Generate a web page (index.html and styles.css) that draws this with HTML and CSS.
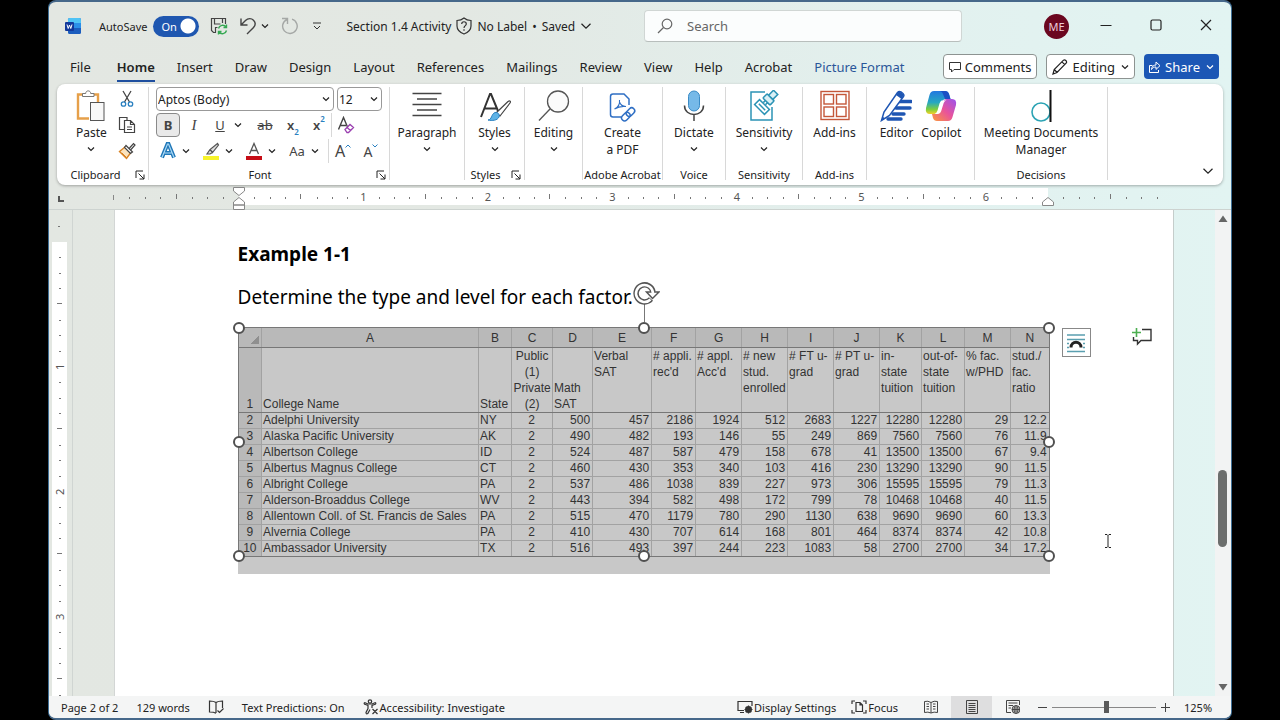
FILE: index.html
```html
<!DOCTYPE html>
<html lang="en">
<head>
  <meta charset="UTF-8">
  <meta name="viewport" content="width=device-width, initial-scale=1">
  <title>Section 1.4 Activity - Word</title>
  <link rel="stylesheet" href="styles.css">
</head>
<body>
  <!-- Shared icons -->
  <svg class="sprite" aria-hidden="true">
    <symbol id="chev" viewBox="0 0 8 8"><path d="M1 2.500l3 3 3-3" fill="none" stroke="currentColor" stroke-width="1.200" vector-effect="non-scaling-stroke"/></symbol>
    <symbol id="launch" viewBox="0 0 10 10"><path d="M1 8V1h7M3.500 3.500L9 9M9 4.500V9H4.500" fill="none" stroke="currentColor"/></symbol>
  </svg>

  <div class="window">
    <!-- Title bar -->
    <header class="titlebar">
      <div class="quick-access">
        <svg class="app-icon" width="16" height="18" viewBox="0 0 16 18">
          <rect x="3" y="1" width="13" height="16" rx="1.5" fill="#1b5dbe"/>
          <path d="M3 6V2.500Q3 1 4.500 1h10Q16 1 16 2.500V6z" fill="#4fc3f5"/>
          <rect x="3" y="6" width="13" height="5" fill="#2b8fe8"/>
          <rect x="0" y="5" width="9" height="9" rx="1" fill="#12389b"/>
          <path d="M2 7.500l1.200 4 1.300-3.500 1.300 3.500L7 7.500" fill="none" stroke="#fff"/>
        </svg>
        <label for="autosave" class="autosave-label">AutoSave</label>
        <span class="switch">
          <input type="checkbox" id="autosave" checked>
          <span class="switch-text">On</span>
        </span>
        <button class="qa-btn" aria-label="Save">
          <svg width="18" height="18" viewBox="0 0 18 18" fill="none">
            <path d="M6 15.500H3.500L1.500 13.500V1.500h14V7M4.500 1.500V7h6M12.500 1.500V6M5.500 15.500V10.500h2" stroke="#444" stroke-width="1.200"/>
            <path d="M8.500 11.500a4.200 4.200 0 0 1 7.500-1.500M16.500 7.500v3h-3M16.500 13.500a4.200 4.200 0 0 1-7.500 1.500M8.500 17.500v-3h3" stroke="#35a852" stroke-width="1.400"/>
          </svg>
        </button>
        <button class="qa-btn" aria-label="Undo">
          <svg width="18" height="18" viewBox="0 0 18 18" fill="none" stroke="#444" stroke-width="1.400"><path d="M2 1.500v6.500h6.500M2 8l4.500-4.500C9 1 12.500 1.200 14.500 3.200s2 5 0 7.300L8 17"/></svg>
        </button>
        <svg class="chev"><use href="#chev"/></svg>
        <button class="qa-btn" aria-label="Redo">
          <svg width="18" height="18" viewBox="0 0 18 18" fill="none" stroke="#a5a8a6" stroke-width="1.400"><path d="M2 1.500h5.500V7M7 2.500a7.300 7.300 0 1 0 5-.3"/></svg>
        </button>
        <button class="qa-btn" aria-label="Customize Quick Access Toolbar">
          <svg width="10" height="10" viewBox="0 0 10 10" fill="none" stroke="#333"><path d="M1 2h8M2 5l3 3 3-3"/></svg>
        </button>
        <div class="doc-title">
          <span>Section 1.4 Activity</span>
          <svg width="16" height="18" viewBox="0 0 16 18" fill="none" stroke="#333" stroke-width="1.200"><path d="M8 1C6 2.800 3.500 3.500 1 3.500V9c0 4 3 6.500 7 8 4-1.500 7-4 7-8V3.500C12.500 3.500 10 2.800 8 1z"/><path d="M5.700 7c0-3 4.600-3 4.600 0C10.300 8.800 8 8.500 8 11M8 12.300v1.400"/></svg>
          <span>No Label</span><span>•</span><span>Saved</span>
          <svg class="chev-lg"><use href="#chev"/></svg>
        </div>
      </div>
      <label class="search">
        <svg width="16" height="16" viewBox="0 0 16 16" fill="none" stroke="#666" stroke-width="1.200"><circle cx="10" cy="6" r="4.800"/><path d="M6.500 9.500L1 15"/></svg>
        <input type="search" placeholder="Search" aria-label="Search">
      </label>
      <div class="window-controls">
        <button class="avatar" aria-label="Account">ME</button>
        <button aria-label="Minimize"><svg width="12" height="12" viewBox="0 0 12 12"><path d="M0.500 6.500h11" stroke="#222"/></svg></button>
        <button aria-label="Maximize"><svg width="12" height="12" viewBox="0 0 12 12"><rect x="1" y="1" width="10" height="10" rx="1.500" fill="none" stroke="#222" stroke-width="1.200"/></svg></button>
        <button aria-label="Close"><svg width="12" height="12" viewBox="0 0 12 12"><path d="M1 1l10 10M11 1L1 11" stroke="#222" stroke-width="1.200"/></svg></button>
      </div>
    </header>

    <!-- Ribbon tabs -->
    <div class="tab-row">
      <nav class="tabs">
        <button>File</button>
        <button class="active">Home</button>
        <button>Insert</button>
        <button>Draw</button>
        <button>Design</button>
        <button>Layout</button>
        <button>References</button>
        <button>Mailings</button>
        <button>Review</button>
        <button>View</button>
        <button>Help</button>
        <button>Acrobat</button>
        <button class="context">Picture Format</button>
      </nav>
      <div class="tab-actions">
        <button class="outlined"><svg width="12" height="12" viewBox="0 0 12 12" fill="none" stroke="#333"><path d="M.500 1.500h11v7H5L2.500 11V8.500h-2z"/></svg>Comments</button>
        <button class="outlined"><svg width="16" height="16" viewBox="0 0 16 16" fill="none" stroke="#222" stroke-width="1.200"><path d="M1 15l1.200-4.500L11.500 1.200c1.500-1 3.800 1 2.800 2.800L5 13.500zM10 2.800l3 3M2.200 10.500l3 3"/></svg>Editing<svg class="chev"><use href="#chev"/></svg></button>
        <button class="share"><svg width="12" height="12" viewBox="0 0 12 12" fill="none" stroke="#fff"><path d="M3.500 4.500h-3v7h9V9M2.500 8.500c.300-3 2-4.500 4.500-4.500V1l4 3.700-4 3.700V6C5 6 3.500 6.500 2.500 8.500z"/></svg>Share<svg class="chev"><use href="#chev"/></svg></button>
      </div>
    </div>

    <!-- Ribbon -->
    <div class="ribbon">
      <section class="group">
        <div class="group-body clipboard">
          <button class="big">
            <svg width="30" height="32" viewBox="0 0 30 32" fill="none"><path d="M13 28.500H2V4.500h20V12" stroke="#e6a04a" stroke-width="2.400"/><path d="M6.500 6.500v-3h3.200c0-3.500 5-3.500 5 0H18v3z" fill="#fff" stroke="#777"/><rect x="14.500" y="12.500" width="13.500" height="18" fill="#f8f8f8" stroke="#555"/></svg>
            <span>Paste</span><svg class="chev"><use href="#chev"/></svg>
          </button>
          <div class="stack">
            <button aria-label="Cut"><svg width="18" height="18" viewBox="0 0 18 18" fill="none"><path d="M5 1l6.500 11M13 1L6.500 12" stroke="#444" stroke-width="1.300"/><circle cx="5.500" cy="14" r="2.200" stroke="#2a80c0" stroke-width="1.300"/><circle cx="12.500" cy="14" r="2.200" stroke="#2a80c0" stroke-width="1.300"/></svg></button>
            <button aria-label="Copy"><svg width="18" height="18" viewBox="0 0 18 18" fill="none" stroke="#444" stroke-width="1.200"><path d="M6.500 13.500h-5v-12H9V4M6.500 4.500h6l4 4v8h-10zM12.500 4.500v4h4M9 11h5M9 13.500h5"/></svg></button>
            <button aria-label="Format Painter"><svg width="18" height="18" viewBox="0 0 18 18" fill="none"><path d="M7 5L1.500 9.500 8.500 16.500 12.500 11z" fill="#fbe3bd" stroke="#d98324" stroke-width="1.400"/><path d="M4 11l4.500 4.500" stroke="#d98324"/><path d="M8 3.500l6.500 6.500-2 1.500L6.500 5.500zM11.500 6l4-4.500 1.500 1.500-4 4.500" fill="#fff" stroke="#444" stroke-width="1.200"/></svg></button>
          </div>
        </div>
        <footer>Clipboard<svg class="launch"><use href="#launch"/></svg></footer>
      </section>

      <section class="group">
        <div class="group-body font-tools">
          <div class="font-row selects">
            <span class="select font-name"><select aria-label="Font"><option>Aptos (Body)</option></select><svg class="chev"><use href="#chev"/></svg></span>
            <span class="select font-size"><select aria-label="Font Size"><option>12</option></select><svg class="chev"><use href="#chev"/></svg></span>
          </div>
          <div class="font-row">
            <button class="tool pressed"><b>B</b></button>
            <button class="tool wide"><em>I</em></button>
            <button class="tool"><u>U</u></button>
            <svg class="chev drop"><use href="#chev"/></svg>
            <button class="tool wide"><s>ab</s></button>
            <button class="tool wide bold">x<sub>2</sub></button>
            <button class="tool bold">x<sup>2</sup></button>
            <span class="divider"></span>
            <button class="tool wide" aria-label="Clear Formatting"><svg width="18" height="18" viewBox="0 0 18 18" fill="none"><path d="M1.500 13.500L6.500 1.500l4 9.500M3.300 9.500H9" stroke="#444" stroke-width="1.400"/><path d="M8 13.500l5-5 3.500 3-5 5h-1.500zM10 11.500l3.500 3" stroke="#9a3fb0" stroke-width="1.300"/></svg></button>
          </div>
          <div class="font-row">
            <button class="tool" aria-label="Text Effects"><svg width="18" height="18" viewBox="0 0 18 18" fill="none"><path d="M3 15.500L8.500 2h1L15 15.500M5.500 11h7" stroke="#2178b8" stroke-width="4"/><path d="M3 15.500L8.500 2h1L15 15.500M5.500 11h7" stroke="#a9d8f5" stroke-width="1.200"/></svg></button>
            <svg class="chev drop"><use href="#chev"/></svg>
            <button class="tool" aria-label="Highlight"><svg width="18" height="18" viewBox="0 0 18 18" fill="none"><rect x="1" y="14" width="16" height="4" fill="#f7f32a"/><path d="M15.500 1.500L8 7.500l2.500 3 6-7.500zM8 7.500L5 12h3l2.500-1.500" fill="#ddd" stroke="#555" stroke-width="1.200"/></svg></button>
            <svg class="chev drop"><use href="#chev"/></svg>
            <button class="tool" aria-label="Font Color"><svg width="18" height="18" viewBox="0 0 18 18" fill="none"><rect x="1" y="14" width="16" height="4" fill="#c60d16"/><path d="M4.500 12L9 1.500 13.500 12M6 8.500h6" stroke="#555" stroke-width="1.300"/></svg></button>
            <svg class="chev drop"><use href="#chev"/></svg>
            <button class="tool">Aa</button>
            <svg class="chev drop"><use href="#chev"/></svg>
            <span class="divider"></span>
            <button class="tool wide grow">A<svg width="6" height="4" viewBox="0 0 6 4" fill="none" stroke="#2a80c0"><path d="M.500 3.500L3 1l2.500 2.500"/></svg></button>
            <button class="tool wide shrink">A<svg width="6" height="4" viewBox="0 0 6 4" fill="none" stroke="#2a80c0"><path d="M.500.500L3 3 5.500.500"/></svg></button>
          </div>
        </div>
        <footer>Font<svg class="launch"><use href="#launch"/></svg></footer>
      </section>

      <section class="group">
        <div class="group-body"><button class="big">
          <svg width="30" height="32" viewBox="0 0 30 32" stroke="#444" stroke-width="1.300"><path d="M.500 3.500h29M5 9h20M.500 14.500h29M5 20h20M.500 25.500h29"/></svg>
          <span>Paragraph</span><svg class="chev"><use href="#chev"/></svg>
        </button></div>
        <footer></footer>
      </section>

      <section class="group">
        <div class="group-body"><button class="big">
          <svg width="32" height="32" viewBox="0 0 32 32" fill="none"><path d="M2 27L11 4h1l7 17M6 18.500h11" stroke="#333" stroke-width="2"/><path d="M17 23L29 11.500c2-1.500 3 0 2 1.500L21 26z" fill="#fff" stroke="#444" stroke-width="1.200"/><path d="M9 30c4 0 3-6 7-7.500 3-.500 5 2 4 4.500-1.500 3.500-7 4-11 3z" fill="#5fb3e6" stroke="#2a80c0"/></svg>
          <span>Styles</span><svg class="chev"><use href="#chev"/></svg>
        </button></div>
        <footer>Styles<svg class="launch"><use href="#launch"/></svg></footer>
      </section>

      <section class="group">
        <div class="group-body"><button class="big">
          <svg width="32" height="32" viewBox="0 0 32 32" fill="none" stroke="#555" stroke-width="1.300"><circle cx="20" cy="11.500" r="10.500" fill="#fbfbfb"/><path d="M12 19L1 30.500"/></svg>
          <span>Editing</span><svg class="chev"><use href="#chev"/></svg>
        </button></div>
        <footer></footer>
      </section>

      <section class="group">
        <div class="group-body"><button class="big">
          <svg width="30" height="32" viewBox="0 0 30 32" fill="none" stroke="#2f6fc4" stroke-width="1.500"><path d="M13 27H5q-2.500 0-2.500-2.500v-18Q2.500 4 5 4h11l5 5v6"/><path d="M6.500 19c3-1.500 5.500-5 5-9M11.500 12c1 3 3 4.500 6.500 4.500-4-.500-7.500 0-11.500 2.500" stroke-width="1.100"/><g transform="rotate(-45 20.500 24)"><rect x="12" y="21" width="9.500" height="6" rx="3"/><rect x="18.500" y="21" width="9.500" height="6" rx="3"/></g></svg>
          <span>Create<br>a PDF</span>
        </button></div>
        <footer>Adobe Acrobat</footer>
      </section>

      <section class="group">
        <div class="group-body"><button class="big">
          <svg width="24" height="32" viewBox="0 0 24 32" fill="none"><rect x="6.500" y="1" width="11" height="20" rx="5.500" fill="#76b9e8" stroke="#3a8bc6"/><path d="M2.500 15.500c0 12 19 12 19 0M12 25v6" stroke="#444" stroke-width="1.500"/></svg>
          <span>Dictate</span><svg class="chev"><use href="#chev"/></svg>
        </button></div>
        <footer>Voice</footer>
      </section>

      <section class="group">
        <div class="group-body"><button class="big">
          <svg width="30" height="32" viewBox="0 0 30 32" fill="none" stroke="#2b93b5" stroke-width="1.500"><path d="M16 2H2v28h21V17"/><g transform="rotate(45 13 17)"><rect x="6" y="13.500" width="14" height="7"/><path d="M8.500 17h9"/></g><g transform="rotate(-45 21 8)" fill="#d9f0f6"><rect x="16" y="3" width="6" height="10" rx="1"/><rect x="22" y="5" width="7" height="6"/><path d="M13 6.500h3M13 9.500h3"/></g></svg>
          <span>Sensitivity</span><svg class="chev"><use href="#chev"/></svg>
        </button></div>
        <footer>Sensitivity</footer>
      </section>

      <section class="group">
        <div class="group-body"><button class="big">
          <svg width="30" height="32" viewBox="0 0 30 32" fill="none" stroke="#c4573a" stroke-width="1.400"><rect x="1" y="1.500" width="28" height="28"/><rect x="4" y="4.500" width="9.500" height="9.500"/><rect x="16.500" y="4.500" width="9.500" height="9.500"/><rect x="4" y="17" width="9.500" height="9.500"/><rect x="16.500" y="17" width="9.500" height="9.500"/></svg>
          <span>Add-ins</span>
        </button></div>
        <footer>Add-ins</footer>
      </section>

      <section class="group">
        <div class="group-body pair">
          <button class="big">
            <svg width="32" height="32" viewBox="0 0 32 32" fill="none"><path d="M19 11.500h12M16 18h14M13 24h11M8 29h13" stroke="#1f56b3" stroke-width="3.400" stroke-linecap="round"/><path d="M1.500 30.500L4 22 17.500 2.500q1.500-1.500 3.500-.500l2 1.500q1.500 1.500.500 3L9.500 25.500z" fill="#fff" stroke="#1f56b3" stroke-width="1.500"/><path d="M16 5l2-3q2-1 5 2 1 1.500-.500 3.500l-1 1.500zM1.500 30.500l1-4 2.500 2z" fill="#1f56b3"/></svg>
            <span>Editor</span>
          </button>
          <button class="big">
            <svg width="32" height="32" viewBox="0 0 32 32">
              <defs>
                <linearGradient id="cpA" x1="0" y1="0" x2="0" y2="1"><stop offset="0" stop-color="#2378e0"/><stop offset=".5" stop-color="#27a8c0"/><stop offset=".8" stop-color="#7fcf3c"/><stop offset="1" stop-color="#f4d02c"/></linearGradient>
                <linearGradient id="cpB" x1="1" y1="0" x2="0" y2="1"><stop offset="0" stop-color="#9a52ee"/><stop offset=".5" stop-color="#e9549a"/><stop offset="1" stop-color="#fb9a3a"/></linearGradient>
              </defs>
              <path d="M9 1h11q3 0 4 3l1.500 5H21q-3 0-4 3l-3 9q-1 3-4 3H5q-5 0-4-6L4.500 5Q5.500 1 9 1z" fill="url(#cpA)"/>
              <path d="M20 1q3 0 4 3l1.500 5H20l-2-5q-1-3-4-3z" fill="#1c4fc4"/>
              <path d="M23 31H12q-3 0-4-3l-1-4h4q3 0 4-3l3-9q1-3 4-3h5q5 0 4 6l-3.500 12Q26.500 31 23 31z" fill="url(#cpB)"/>
              <path d="M16.500 10.500h5q-2 0-2.800 2.500l-2.500 8q-1 3-3.700 3h-3q2-.500 3-3.500l2-7q.700-2 2-3z" fill="#fff"/>
            </svg>
            <span>Copilot</span>
          </button>
        </div>
        <footer></footer>
      </section>

      <section class="group">
        <div class="group-body"><button class="big">
          <svg width="22" height="32" viewBox="0 0 22 32" fill="none"><circle cx="11" cy="22" r="9" stroke="#2ba3b4" stroke-width="1.600"/><path d="M20.500 0v32" stroke="#111" stroke-width="2"/></svg>
          <span>Meeting Documents<br>Manager</span>
        </button></div>
        <footer>Decisions</footer>
      </section>

      <button class="collapse" aria-label="Collapse the Ribbon"><svg class="chev-lg"><use href="#chev"/></svg></button>
    </div>

    <!-- Horizontal ruler -->
    <div class="ruler">
      <button class="tab-stop" aria-label="Left tab"></button>
      <div class="ruler-margin left">
        <span class="cell"><i></i></span><span class="cell"></span>
      </div>
      <div class="ruler-body">
        <svg class="indent" width="12" height="24" viewBox="0 0 12 24" fill="#fff" stroke="#888"><path d="M.500.500h11V4L6 8.500.500 4zM.500 15L6 10.500l5.500 4.500v3H.500zM.500 18h11v4.500H.500z"/></svg>
        <span class="cell"><i></i></span><span class="cell"><b>1</b></span>
        <span class="cell"><i></i></span><span class="cell"><b>2</b></span>
        <span class="cell"><i></i></span><span class="cell"><b>3</b></span>
        <span class="cell"><i></i></span><span class="cell"><b>4</b></span>
        <span class="cell"><i></i></span><span class="cell"><b>5</b></span>
        <span class="cell"><i></i></span><span class="cell"><b>6</b></span>
        <span class="cell"></span>
        <svg class="indent right" width="12" height="24" viewBox="0 0 12 24" fill="#fff" stroke="#888"><path d="M.500 15L6 10.500l5.500 4.500v3.500H.500z"/></svg>
      </div>
      <div class="ruler-margin right">
        <span class="cell"><i></i></span><span class="cell"></span>
      </div>
    </div>

    <!-- Document -->
    <main class="workspace">
      <div class="v-ruler">
        <span class="v-top"></span>
        <div class="v-body">
          <span class="v-cell"><i></i></span><span class="v-cell"><b>1</b></span>
          <span class="v-cell"><i></i></span><span class="v-cell"><b>2</b></span>
          <span class="v-cell"><i></i></span><span class="v-cell"><b>3</b></span>
          <span class="v-cell"><i></i></span><span class="v-cell"></span>
        </div>
      </div>
      <article class="page">
        <h1>Example 1-1</h1>
        <p>Determine the type and level for each factor.</p>
        <div class="selection">
          <div class="picture">
            <table>
              <colgroup>
                <col style="width:23px"><col style="width:217px"><col style="width:33px"><col style="width:41px"><col style="width:40px"><col style="width:59px"><col style="width:44px"><col style="width:46px"><col style="width:46px"><col style="width:46px"><col style="width:46px"><col style="width:42px"><col style="width:43px"><col style="width:46px"><col style="width:38px">
              </colgroup>
              <thead>
                <tr class="letters"><th class="corner"></th><th>A</th><th>B</th><th>C</th><th>D</th><th>E</th><th>F</th><th>G</th><th>H</th><th>I</th><th>J</th><th>K</th><th>L</th><th>M</th><th>N</th></tr>
                <tr class="titles"><th>1</th><td>College Name</td><td>State</td><td>Public<br>(1)<br>Private<br>(2)</td><td>Math<br>SAT</td><td>Verbal<br>SAT</td><td># appli.<br>rec'd</td><td># appl.<br>Acc'd</td><td># new<br>stud.<br>enrolled</td><td># FT u-<br>grad</td><td># PT u-<br>grad</td><td>in-<br>state<br>tuition</td><td>out-of-<br>state<br>tuition</td><td>% fac.<br>w/PHD</td><td>stud./<br>fac.<br>ratio</td></tr>
              </thead>
              <tbody>
                <tr><th>2</th><td>Adelphi University</td><td>NY</td><td>2</td><td>500</td><td>457</td><td>2186</td><td>1924</td><td>512</td><td>2683</td><td>1227</td><td>12280</td><td>12280</td><td>29</td><td>12.2</td></tr>
                <tr><th>3</th><td>Alaska Pacific University</td><td>AK</td><td>2</td><td>490</td><td>482</td><td>193</td><td>146</td><td>55</td><td>249</td><td>869</td><td>7560</td><td>7560</td><td>76</td><td>11.9</td></tr>
                <tr><th>4</th><td>Albertson College</td><td>ID</td><td>2</td><td>524</td><td>487</td><td>587</td><td>479</td><td>158</td><td>678</td><td>41</td><td>13500</td><td>13500</td><td>67</td><td>9.4</td></tr>
                <tr><th>5</th><td>Albertus Magnus College</td><td>CT</td><td>2</td><td>460</td><td>430</td><td>353</td><td>340</td><td>103</td><td>416</td><td>230</td><td>13290</td><td>13290</td><td>90</td><td>11.5</td></tr>
                <tr><th>6</th><td>Albright College</td><td>PA</td><td>2</td><td>537</td><td>486</td><td>1038</td><td>839</td><td>227</td><td>973</td><td>306</td><td>15595</td><td>15595</td><td>79</td><td>11.3</td></tr>
                <tr><th>7</th><td>Alderson-Broaddus College</td><td>WV</td><td>2</td><td>443</td><td>394</td><td>582</td><td>498</td><td>172</td><td>799</td><td>78</td><td>10468</td><td>10468</td><td>40</td><td>11.5</td></tr>
                <tr><th>8</th><td>Allentown Coll. of St. Francis de Sales</td><td>PA</td><td>2</td><td>515</td><td>470</td><td>1179</td><td>780</td><td>290</td><td>1130</td><td>638</td><td>9690</td><td>9690</td><td>60</td><td>13.3</td></tr>
                <tr><th>9</th><td>Alvernia College</td><td>PA</td><td>2</td><td>410</td><td>430</td><td>707</td><td>614</td><td>168</td><td>801</td><td>464</td><td>8374</td><td>8374</td><td>42</td><td>10.8</td></tr>
                <tr><th>10</th><td>Ambassador University</td><td>TX</td><td>2</td><td>516</td><td>493</td><td>397</td><td>244</td><td>223</td><td>1083</td><td>58</td><td>2700</td><td>2700</td><td>34</td><td>17.2</td></tr>
              </tbody>
            </table>
            <span class="handle nw"></span><span class="handle n"></span><span class="handle ne"></span>
            <span class="handle w"></span><span class="handle e"></span>
            <span class="handle sw"></span><span class="handle s"></span><span class="handle se"></span>
            <span class="stem"></span>
            <svg class="rotate" width="28" height="24" viewBox="0 0 28 24" fill="none"><path d="M19 18A8.500 8.500 0 1 1 21 11" stroke="#555" stroke-width="5.500"/><path d="M14.500 11H27l-6.500 6.500z" fill="#fff" stroke="#555" stroke-width="1.500"/><path d="M18.500 18.500A8.500 8.500 0 1 1 21 12.500" stroke="#fff" stroke-width="2.500"/></svg>
            <button class="layout-options" aria-label="Layout Options"><svg width="20" height="20" viewBox="0 0 20 20" fill="none"><path d="M1 2h18M1 6.500h18M1 10.500h2M17 10.500h2M1 14.500h2M17 14.500h2M1 18.500h18" stroke="#5a9fb0" stroke-width="1.500"/><path d="M5 14.500c0-7 10-7 10 0" stroke="#222" stroke-width="3"/></svg></button>
            <button class="add-comment" aria-label="New Comment"><svg width="20" height="20" viewBox="0 0 20 20" fill="none"><path d="M10 2.500h9v11H9L5.500 17v-3.500h-4V10" stroke="#333" stroke-width="1.400"/><path d="M4.500 1v9M0 5.500h9" stroke="#4caf50" stroke-width="1.600"/></svg></button>
          </div>
        </div>
        <svg class="caret" width="8" height="14" viewBox="0 0 8 14" fill="none" stroke="#222"><path d="M1 .500h2l1 1 1-1h2M4 1.500v11M1 13.500h2l1-1 1 1h2"/></svg>
      </article>
      <div class="scrollbar">
        <svg width="10" height="8" viewBox="0 0 10 8"><path d="M5 0.500L9.500 7h-9z" fill="#666"/></svg>
        <span class="thumb"></span>
        <svg width="10" height="8" viewBox="0 0 10 8"><path d="M5 7.500L.500 1h9z" fill="#666"/></svg>
      </div>
    </main>

    <!-- Status bar -->
    <footer class="statusbar">
      <div class="status-left">
        <span>Page 2 of 2</span>
        <span>129 words</span>
        <button aria-label="Proofing"><svg width="16" height="14" viewBox="0 0 16 14" fill="none" stroke="#333" stroke-width="1.200"><path d="M8 2.500C6 1 4 1 1.500 1v11c2.500 0 4.500 0 6.500 1.300M8 2.500C10 1 12 1 14.500 1v7M8 2.500V13M9.500 10.500l2 2 4-4"/></svg></button>
        <span>Text Predictions: On</span>
        <button><svg width="16" height="16" viewBox="0 0 16 16" fill="none" stroke="#333" stroke-width="1.200"><circle cx="7" cy="2.500" r="1.700"/><path d="M1.500 3.500q-1 1.500 1 2l2.500 1v3l-2 4q0 2 1.800 1L7 10.500M12.500 3.500q1 1.500-1 2L9 6.500V9M1.500 3.500L5 5h4l3.500-1.500M9.500 10l5 5M14.500 10l-5 5"/></svg>Accessibility: Investigate</button>
      </div>
      <div class="status-right">
        <button><svg width="16" height="14" viewBox="0 0 16 14" fill="none" stroke="#333" stroke-width="1.200"><path d="M7 10.500H1v-9h14V6M3 12.500h4"/><circle cx="11.500" cy="9.500" r="2.500" stroke-width="2"/><path d="M11.500 5.500v8M7.500 9.500h8M8.800 6.800l5.400 5.400M14.200 6.800l-5.400 5.400"/></svg>Display Settings</button>
        <button class="focus"><svg width="16" height="14" viewBox="0 0 16 14" fill="none" stroke="#333" stroke-width="1.200"><path d="M4 1H1v3M12 1h3v3M4 13H1v-3M12 13h3v-3M5 2.500h4l2.500 2.500v6.500H5zM9 2.500V5h2.500"/></svg>Focus</button>
        <button class="view" aria-label="Read Mode"><svg width="14" height="14" viewBox="0 0 14 14" fill="none" stroke="#444"><path d="M7 2.500Q4 .500.500 1.500v11Q4 11.500 7 13q3-1.500 6.500-.500v-11Q10 .500 7 2.500V13M2.500 4H5M2.500 6.500H5M2.500 9H5M9 4h2.500M9 6.500h2.500M9 9h2.500"/></svg></button>
        <button class="view current" aria-label="Print Layout"><svg width="12" height="14" viewBox="0 0 12 14" fill="none" stroke="#444"><path d="M.500.500h11v13H.500zM2.500 3.500h7M2.500 5.500h7M2.500 7.500h7M2.500 9.500h7M2.500 11.500h7"/></svg></button>
        <button class="view" aria-label="Web Layout"><svg width="14" height="14" viewBox="0 0 14 14" fill="none" stroke="#444"><path d="M5 12.500H.500v-12h13V5M2.500 3h9M2.500 5.500H7M2.500 8H5"/><circle cx="10" cy="9.500" r="4" fill="#ccc"/><path d="M6 9.500h8M10 5.500v8M8.500 6.500q-1 3 0 6M11.500 6.500q1 3 0 6"/></svg></button>
        <button class="step" aria-label="Zoom Out"><svg width="9" height="9" viewBox="0 0 9 9"><path d="M0 4.500h9" stroke="#444"/></svg></button>
        <input type="range" class="zoom" min="0" max="100" value="53" aria-label="Zoom">
        <button class="step" aria-label="Zoom In"><svg width="9" height="9" viewBox="0 0 9 9"><path d="M0 4.500h9M4.500 0v9" stroke="#444"/></svg></button>
        <span class="percent">125%</span>
      </div>
    </footer>
  </div>
</body>
</html>
```
FILE: styles.css
```css
/* Base */
* { box-sizing: border-box; margin: 0; padding: 0; }
body {
  background: #000;
  padding: 0 48px;
  font-family: "Noto Sans", "Open Sans", sans-serif;
  font-size: 12px;
  color: #222;
}
button, select, input {
  font: inherit;
  color: inherit;
  background: none;
  border: none;
}
svg { flex: none; }
.sprite { position: absolute; width: 0; height: 0; }
.chev { width: 8px; height: 8px; }
.chev-lg { width: 12px; height: 12px; }
.launch { width: 10px; height: 10px; }
.window {
  display: flex;
  flex-direction: column;
  height: 100vh;
  border: 1px solid #3f6f96;
  border-top: 2px solid #46688a;
  border-bottom: 2px solid #46688a;
  border-radius: 8px;
  overflow: hidden;
  background: linear-gradient(90deg, #e3e7e2 0%, #e3e8e3 35%, #e2f1ef 75%, #e2f4f2 100%);
}

/* Title bar */
.titlebar {
  display: grid;
  grid-template-columns: 595px 318px 1fr;
  align-items: center;
  height: 48px;
}
.quick-access {
  display: flex;
  align-items: center;
  padding-left: 16px;
}
.autosave-label { margin-left: 18px; font-size: 11px; }
.switch {
  position: relative;
  width: 46px;
  height: 21px;
  margin-left: 6px;
}
.switch input {
  appearance: none;
  display: block;
  width: 46px;
  height: 21px;
  border-radius: 11px;
  background: radial-gradient(circle at 35px 10px, #fff 7px, #1f57b0 8px);
}
.switch-text {
  position: absolute;
  left: 8px;
  top: 3px;
  font-size: 11px;
  line-height: 15px;
  color: #fff;
  pointer-events: none;
}
.qa-btn {
  display: flex;
  margin-left: 11px;
}
.qa-btn + .chev { margin-left: 4px; }
.qa-btn:last-of-type { margin-left: 14px; }
.doc-title {
  display: flex;
  align-items: center;
  gap: 5px;
  margin-left: 24px;
  white-space: nowrap;
}
.search {
  display: flex;
  align-items: center;
  gap: 14px;
  height: 32px;
  padding: 0 12px;
  background: #fbfdfd;
  border: 1px solid #d0d6d4;
  border-bottom-color: #b8bebc;
  border-radius: 4px;
}
.search input { flex: 1; min-width: 0; font-size: 13px; outline: none; }
.search input::placeholder { color: #666; }
.window-controls {
  display: flex;
  justify-content: flex-end;
  align-items: center;
}
.window-controls button { width: 50px; height: 32px; }
.window-controls .avatar {
  width: 25px;
  height: 25px;
  margin-right: 12px;
  border-radius: 50%;
  background: #6b0720;
  color: #eecbd8;
  font-size: 11px;
}

/* Ribbon tabs */
.tab-row {
  display: flex;
  justify-content: space-between;
  height: 34px;
  padding: 0 12px 0 21px;
}
.tabs { display: flex; gap: 22px; }
.tabs button {
  height: 30px;
  margin-top: 2px;
  font-size: 13px;
  white-space: nowrap;
}
.tabs button:first-child { margin-right: 4px; }
.tabs .active {
  font-weight: 600;
  border-bottom: 2px solid #1f4f9f;
  padding-top: 2px;
}
.tabs .context { color: #2a5699; }
.tab-actions { display: flex; gap: 9px; padding-top: 4px; }
.tab-actions button {
  display: flex;
  align-items: center;
  gap: 4px;
  height: 25px;
  padding: 0 5px;
  border-radius: 4px;
  font-size: 13px;
}
.tab-actions .chev { margin-left: 2px; }
.tab-actions .outlined { background: #fff; border: 1px solid #8d9391; }
.tab-actions .share { background: #1c57b5; color: #fff; }

/* Ribbon */
.ribbon {
  display: grid;
  grid-template-columns: 92px 241px 75px 60px 58px 80px 63px 77px 64px 108px 133px 1fr;
  height: 101px;
  margin: 0 8px;
  padding: 3px 0 5px;
  background: #fff;
  border-radius: 8px;
  box-shadow: 0 1px 3px rgba(0,0,0,0.3);
}
.group {
  display: flex;
  flex-direction: column;
  border-right: 1px solid #d8d8d8;
}
.group-body {
  flex: 1;
  display: flex;
  justify-content: center;
}
.group footer {
  position: relative;
  height: 17px;
  font-size: 11px;
  line-height: 23px;
  text-align: center;
  white-space: nowrap;
}
.group .launch { position: absolute; right: 3px; top: 7px; }
.group:first-child footer { padding-right: 14px; }
.group:nth-child(2) footer,
.group:nth-child(4) footer { padding-right: 18px; }
.big {
  display: flex;
  flex-direction: column;
  align-items: center;
  padding-top: 3px;
  line-height: 17px;
  white-space: nowrap;
}
.big svg:first-child { margin-bottom: 2px; }
.big .chev { margin-top: 4px; }
.pair { gap: 8px; }
.clipboard { justify-content: flex-start; padding-left: 19px; gap: 11px; }
.stack { display: flex; flex-direction: column; padding-top: 3px; gap: 8px; }
.stack button { display: flex; }
.font-tools { flex-direction: column; justify-content: flex-start; padding-left: 7px; gap: 2px; }
.font-row { display: flex; align-items: center; height: 24px; }
.selects { gap: 3px; }
.select {
  display: flex;
  align-items: center;
  height: 24px;
  padding: 0 3px 0 1px;
  border: 1px solid #999;
  border-radius: 4px;
}
.select select { flex: 1; min-width: 0; appearance: none; }
.font-name { width: 178px; }
.font-size { width: 45px; }
.tool {
  display: flex;
  justify-content: center;
  align-items: center;
  width: 24px;
  height: 24px;
  font-size: 13px;
  color: #444;
}
.tool.wide { width: 28px; }
.tool.bold { font-weight: 600; }
.tool.pressed { background: #e9e9e9; border: 1px solid #8a8a8a; border-radius: 4px; }
.tool em { font-family: "Liberation Serif", serif; font-size: 15px; }
.tool sub, .tool sup { font-size: 8px; color: #2a80c0; }
.tool sub { align-self: flex-end; }
.tool sup { align-self: flex-start; }
.tool.grow { font-size: 16px; }
.tool.shrink { font-size: 14px; }
.grow svg, .shrink svg { align-self: flex-start; margin-top: 5px; }
.drop { width: 12px; margin-right: 7px; }
.divider { width: 1px; height: 24px; background: #d8d8d8; }
.collapse { justify-self: end; align-self: end; display: flex; margin: 0 9px 3px 0; }

/* Rulers */
.ruler {
  display: flex;
  height: 25px;
  padding: 3px 58px 4px 0;
  border-bottom: 1px solid #cdd3d0;
}
.tab-stop {
  width: 6px;
  height: 6px;
  margin: 8px 44px 0 9px;
  border: solid #555;
  border-width: 0 0 2px 2px;
}
.ruler-margin { display: flex; }
.ruler-margin.left {
  width: 131px;
  padding-left: 6px;
  background: linear-gradient(#888, #888) 5px 7px / 1px 5px no-repeat;
}
.ruler-margin.right { width: 125px; }
.ruler-body { position: relative; display: flex; flex: 1; background: #fff; }
.cell {
  flex: 1;
  display: flex;
  justify-content: flex-end;
  align-items: center;
  background:
    linear-gradient(#777, #777) 25% 9px / 1px 2px no-repeat,
    linear-gradient(#777, #777) 50% 9px / 1px 2px no-repeat,
    linear-gradient(#777, #777) 75% 9px / 1px 2px no-repeat;
}
.cell i { width: 1px; height: 5px; background: #777; }
.cell b, .v-cell b {
  display: flex;
  justify-content: center;
  width: 0;
  font-size: 11px;
  font-weight: normal;
  color: #555;
}
.indent { position: absolute; left: -6px; top: -1px; z-index: 1; }
.indent.right { left: auto; right: -6px; }

/* Document */
.workspace { flex: 1; display: flex; min-height: 0; }
.v-ruler {
  display: flex;
  flex-direction: column;
  width: 25px;
  padding: 0 5px 0 3px;
  margin-right: 41px;
  border-right: 1px solid #d0d5d2;
  overflow: hidden;
}
.v-top {
  flex: none;
  height: 32px;
  background: linear-gradient(#777, #777) 50% 16px / 2px 1px no-repeat;
}
.v-body { flex: 1; display: grid; grid-auto-rows: 62px 63px; background: #fff; }
.v-cell {
  display: flex;
  justify-content: center;
  align-items: flex-end;
  background:
    linear-gradient(#777, #777) 50% 25% / 2px 1px no-repeat,
    linear-gradient(#777, #777) 50% 50% / 2px 1px no-repeat,
    linear-gradient(#777, #777) 50% 75% / 2px 1px no-repeat;
}
.v-cell i { width: 5px; height: 1px; background: #777; }
.v-cell b { width: 15px; height: 0; align-items: center; writing-mode: vertical-rl; transform: rotate(180deg); }
.page {
  position: relative;
  flex: 1;
  padding: 30px 123px 0;
  background: #fff;
  border-left: 1px solid #d3d6d5;
  border-right: 1px solid #c5cdcb;
  color: #000;
}
.page h1 { font-size: 19px; line-height: 28px; }
.page p { margin: 15px 0 16px; font-size: 19px; line-height: 28px; white-space: nowrap; }
.selection { background: #c8c8c8; padding-bottom: 17px; }
.picture { position: relative; border: 1px solid #777; }
table {
  width: 100%;
  table-layout: fixed;
  border-collapse: collapse;
  background: #c8c8c8;
  font-family: "Liberation Sans", Arial, sans-serif;
  font-size: 12px;
  line-height: 15px;
  color: #333;
}
th, td {
  height: 16px;
  padding: 0 2px 0 1px;
  border: 1px solid #a2a2a2;
  font-weight: normal;
  text-align: right;
  white-space: nowrap;
}
th { background: #b9b9b9; text-align: center; padding: 0; }
tr > :first-child { border-left: none; }
tr > :last-child { border-right: none; }
.letters th { height: 19px; padding-top: 3px; border-top: none; border-bottom-color: #777; }
.letters .corner { background: linear-gradient(135deg, transparent 50%, #8f8f8f 50%) 12px 8px / 8px 8px no-repeat #b9b9b9; }
.titles td, .titles th { height: 64px; line-height: 16px; vertical-align: top; text-align: left; border-bottom-color: #777; }
.titles th { text-align: center; }
.titles th, .titles td:nth-child(2), .titles td:nth-child(3), .titles td:nth-child(5) { vertical-align: bottom; }
.titles td:nth-child(4) { text-align: center; padding: 0; }
tbody td:nth-child(2), tbody td:nth-child(3) { text-align: left; }
tbody td:nth-child(4) { text-align: center; }
tbody tr:last-child > * { border-bottom: none; }

/* Picture selection handles */
.handle {
  position: absolute;
  width: 12px;
  height: 12px;
  margin: -6px;
  background: #fff;
  border: 2px solid #505050;
  border-radius: 50%;
}
.nw, .n, .ne { top: 0; }
.w, .e { top: 50%; }
.sw, .s, .se { top: 100%; }
.nw, .w, .sw { left: 0; }
.n, .s { left: 50%; }
.ne, .e, .se { left: 100%; }
.stem { position: absolute; left: 50%; top: -24px; width: 1px; height: 18px; background: #777; }
.rotate { position: absolute; left: 50%; top: -47px; margin-left: -12px; }
.layout-options {
  position: absolute;
  left: 100%;
  top: 0;
  display: flex;
  justify-content: center;
  align-items: center;
  width: 29px;
  height: 29px;
  margin-left: 13px;
  background: #fff;
  border: 1px solid #888;
}
.add-comment { position: absolute; left: 100%; top: -1px; margin-left: 83px; }
.caret { position: absolute; right: 61px; top: 324px; }
.scrollbar {
  display: flex;
  flex-direction: column;
  align-items: center;
  width: 18px;
  margin-left: 41px;
  padding: 5px 0;
  background: #f2f3f3;
}
.thumb { width: 9px; height: 77px; margin: 247px 0 auto; border-radius: 5px; background: #6c6e6d; }

/* Status bar */
.statusbar {
  display: flex;
  justify-content: space-between;
  height: 22px;
  background: #f4f5f5;
  font-size: 11px;
  white-space: nowrap;
}
.status-left, .status-right { display: flex; align-items: center; }
.status-left { gap: 18px; padding-left: 12px; }
.statusbar button { display: flex; align-items: center; gap: 1px; }
.focus { margin: 0 12px 0 15px; }
.statusbar .view { justify-content: center; width: 41px; height: 22px; }
.view.current { background: #dededf; }
.statusbar .step { margin: 0 5px; }
.zoom {
  appearance: none;
  width: 104px;
  height: 12px;
  background: linear-gradient(#888, #888) 0 50% / 100% 1px no-repeat;
}
.zoom::-webkit-slider-thumb {
  appearance: none;
  width: 5px;
  height: 12px;
  background: #5a5a5a;
}
.percent { width: 56px; padding-left: 9px; }
```
